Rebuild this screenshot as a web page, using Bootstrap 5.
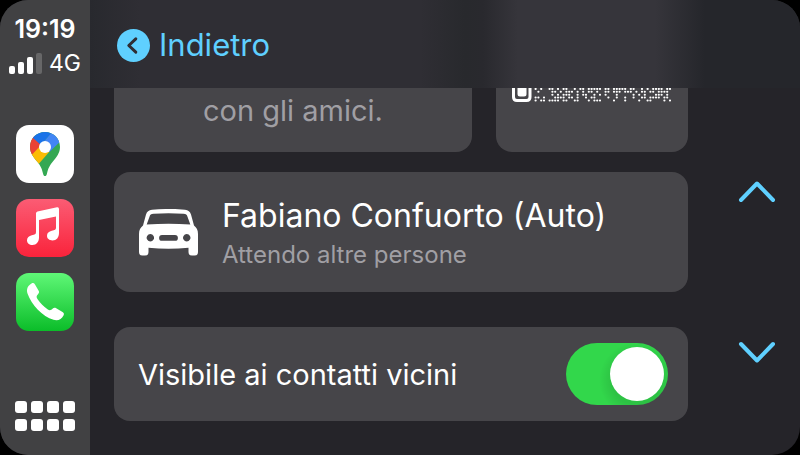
<!DOCTYPE html>
<html lang="it">
<head>
<meta charset="utf-8">
<meta name="viewport" content="width=device-width, initial-scale=1">
<title>SharePlay in auto</title>
<link href="https://cdn.jsdelivr.net/npm/bootstrap@5.3.0/dist/css/bootstrap.min.css" rel="stylesheet">
<style>
  body { background: #000; color: #fff; font-family: Inter, "Liberation Sans", sans-serif; }
  svg { display: block; }
  .screen { border-radius: 28px; background: #252429; }
  .dock { flex: 0 0 90px; background: #414143; padding: 15px 0 24px; }
  .clock { font-size: 25px; font-weight: 600; line-height: 28px; }
  .network { font-size: 23px; line-height: 28px; margin-top: 6px; gap: 7px; }
  .apps { gap: 16px; margin-top: 48px; }
  .topbar { height: 88px; padding: 2px 0 0 27px;
    background: linear-gradient(90deg, #28292e 0, #2f2e34 50px, #2f2e34 330px, #28292d 375px, #29292e 393px, #36353b 428px, #36353b 565px, #25262b 615px, #25262b 100%); }
  .back { color: #5fd0ff; font-size: 31px; line-height: 40px; gap: 9px; }
  .content { padding-left: 24px; }
  .panel { background: #464549; border-radius: 16px; }
  .upper { height: 64px; border-radius: 0 0 16px 16px; }
  .upper-row { gap: 24px; }
  .invite { color: #a09fa4; font-size: 29px; line-height: 46px; }
  .code { flex: 0 0 192px; }
  .person { height: 120px; margin-top: 20px; padding: 0 24px 0 25px; gap: 24px; }
  .person-text { padding-top: 3px; }
  .person h1 { font-size: 32px; line-height: 40px; font-weight: 400; }
  .person p { color: #a09fa4; font-size: 24px; line-height: 32px; margin-top: 3px; }
  .visible { height: 94px; margin-top: 35px; padding: 0 20px 0 24px; font-size: 29px; }
  .visible label { padding-top: 2px; }
  .form-check-input.toggle { width: 102px; height: 62px; border: 0; border-radius: 31px; background-size: 102px 62px; background-repeat: no-repeat; }
  .form-switch .form-check-input.toggle,
  .form-switch .form-check-input.toggle:focus { background-color: #69686d; background-position: center;
    background-image: url("data:image/svg+xml,%3Csvg xmlns='http://www.w3.org/2000/svg' viewBox='0 0 102 62'%3E%3Ccircle cx='31' cy='31' r='27' fill='white'/%3E%3C/svg%3E"); }
  .form-switch .form-check-input.toggle:checked { background-color: #32d74b;
    background-image: url("data:image/svg+xml,%3Csvg xmlns='http://www.w3.org/2000/svg' viewBox='0 0 102 62'%3E%3Cdefs%3E%3CradialGradient id='s'%3E%3Cstop offset='.65' stop-opacity='.1'/%3E%3Cstop offset='1' stop-opacity='0'/%3E%3C/radialGradient%3E%3C/defs%3E%3Ccircle cx='71' cy='37' r='38' fill='url(%23s)'/%3E%3Ccircle cx='71' cy='31' r='27' fill='white'/%3E%3C/svg%3E"); }
  .scroller { flex: 0 0 112px; padding: 92px 0 0 25px; gap: 136px; }
</style>
<script src="https://cdn.jsdelivr.net/npm/bootstrap@5.3.0/dist/js/bootstrap.bundle.min.js"></script>
</head>
<body>
<div class="screen d-flex min-vh-100 overflow-hidden">
  <nav class="dock d-flex flex-column align-items-center" aria-label="Dock">
    <div class="clock">19:19</div>
    <div class="network d-flex align-items-center">
      <svg width="33" height="22" viewBox="0 0 33 22" fill="#fff" aria-hidden="true"><rect y="14" width="6" height="8" rx="2"/><rect x="9" y="10" width="6" height="12" rx="2"/><rect x="18" y="5" width="6" height="17" rx="2"/><rect x="27" y="1" width="6" height="21" rx="2" opacity=".2"/></svg>
      <span>4G</span>
    </div>
    <div class="apps d-flex flex-column">
      <button type="button" class="btn p-0 border-0" aria-label="Google Maps">
        <svg width="58" height="58" viewBox="0 0 58 58">
          <defs><clipPath id="pin"><path d="M29 7C20.500 7 14 13.500 14 22C14 28 17.500 32 21.500 37C25 41.500 26 44 27 48.500C27.500 50.500 28 51 29 51S30.500 50.500 31 48.500C32 44 33 41.500 36.500 37C40.500 32 44 28 44 22C44 13.500 37.500 7 29 7Z"/></clipPath></defs>
          <rect width="58" height="58" rx="13" fill="#fff"/>
          <g clip-path="url(#pin)"><path fill="#34a853" d="M10 5h38v48H10z"/><path fill="#fbbc04" d="M8 38L24.500 18L34 26L20 42H10z"/><path fill="#ea4335" d="M10 8L18 10.500L27 18L11 35z"/><path fill="#1a73e8" d="M14 5H38L25 20L17 13z"/><path fill="#4285f4" d="M37 6L48 13L33.500 27L25 20z"/></g>
          <circle cx="29" cy="22" r="6" fill="#fff"/>
        </svg>
      </button>
      <button type="button" class="btn p-0 border-0" aria-label="Musica">
        <svg width="58" height="58" viewBox="0 0 58 58">
          <defs><linearGradient id="red" x2="0" y2="1"><stop stop-color="#fb5c74"/><stop offset="1" stop-color="#fa233b"/></linearGradient></defs>
          <rect width="58" height="58" rx="13" fill="url(#red)"/>
          <path fill="#fff" d="M21.500 12.500L41 8.200Q43 7.800 43 10V34C43 38.500 40.500 41.500 36.500 41.500C33.200 41.500 31 39.500 31 36.800C31 34 33 32.400 35.800 31.800C38.800 31.200 40 31 40 28.600V17.500L23 21V38.500C23 42.800 20.500 46 16.500 46C13.200 46 11 44 11 41.200C11 38.500 13 36.800 15.800 36.200C18.800 35.600 20 35.400 20 33V14.500Q20 12.800 21.500 12.500Z"/>
        </svg>
      </button>
      <button type="button" class="btn p-0 border-0" aria-label="Telefono">
        <svg width="58" height="58" viewBox="0 0 58 58">
          <defs><linearGradient id="green" x2="0" y2="1"><stop stop-color="#5ff777"/><stop offset="1" stop-color="#0bbd29"/></linearGradient></defs>
          <rect width="58" height="58" rx="13" fill="url(#green)"/>
          <path fill="#fff" d="M15.500 10.500C17 9.700 18 10 19 11.500L22.500 17.500C23.500 19 23 20 22 21.200C20.200 23.200 20.200 24.200 21.800 26.500C24.500 30.300 27.500 33.400 31.500 36.200C33.600 37.700 34.600 37.600 36.500 35.800C37.700 34.700 38.600 34.400 40.200 35.200L46.500 39C48 40 48.300 41 47.500 42.500C45.500 46.300 42 48.200 37.500 46.800C26.500 43.500 15.500 32 11.500 20.500C10.200 16.500 11.500 12.700 15.500 10.500Z"/>
        </svg>
      </button>
    </div>
    <button type="button" class="btn p-0 border-0 mt-auto" aria-label="Tutte le app">
      <svg width="60" height="30" viewBox="0 0 60 30" fill="#fff"><rect width="12" height="12" rx="3"/><rect x="16" width="12" height="12" rx="3"/><rect x="32" width="12" height="12" rx="3"/><rect x="48" width="12" height="12" rx="3"/><rect y="18" width="12" height="12" rx="3"/><rect x="16" y="18" width="12" height="12" rx="3"/><rect x="32" y="18" width="12" height="12" rx="3"/><rect x="48" y="18" width="12" height="12" rx="3"/></svg>
    </button>
  </nav>

  <div class="flex-grow-1 d-flex flex-column">
    <header class="topbar d-flex align-items-center">
      <a href="#" class="back d-flex align-items-center text-decoration-none">
        <svg width="33" height="33" viewBox="0 0 33 33" aria-hidden="true"><circle cx="16.500" cy="16.500" r="16.500" fill="#5fd0ff"/><path d="M18.800 9.800L11.800 16.500L18.800 23.200" fill="none" stroke="#2f2e34" stroke-width="3" stroke-linecap="round" stroke-linejoin="round"/></svg>
        <span>Indietro</span>
      </a>
    </header>
    <div class="d-flex flex-grow-1">
      <main class="content flex-grow-1">
        <div class="upper-row d-flex">
          <section class="panel upper invite flex-grow-1 text-center">con gli amici.</section>
          <section class="panel upper code">
            <svg width="192" height="20" viewBox="0 0 192 20" role="img" aria-label="Codice QR">
              <path d="M17.500 -5V9Q17.500 12.500 21 12.500H30.500Q34 12.500 34 9V-5" fill="none" stroke="#fff" stroke-width="3"/>
              <rect x="21.500" y="-4" width="9" height="12.500" rx="2.500" fill="#fff"/>
              <path id="dots" fill="none" stroke="#fff" stroke-width="2" stroke-linecap="round"/>
            </svg>
          </section>
        </div>
        <section class="panel person d-flex align-items-center">
          <svg width="59" height="47" viewBox="0 0 59 47" fill="#fff" aria-hidden="true"><path fill-rule="evenodd" d="M13 .8C23 -.3 36 -.3 46 .8C49.300 1.200 51 2.600 52 5.500L55 16.500C57.600 18.800 59 21 59 25V43Q59 46.500 55.500 46.500H53Q49.500 46.500 49.500 43V38.800Q29.500 40.500 9.500 38.800V43Q9.500 46.500 6 46.500H3.500Q0 46.500 0 43V25C0 21 1.400 18.800 4 16.500L7 5.500C8 2.600 9.700 1.200 13 .8ZM14.500 4.800C12 5.100 11.200 5.600 10.500 7.700L7.700 15.500Q29.500 13.900 51.300 15.500L48.500 7.700C47.800 5.600 47 5.100 44.500 4.800Q29.500 3.500 14.500 4.800ZM11.300 25a3.700 3.700 0 1 0 .1 0ZM47.700 25a3.700 3.700 0 1 0 .1 0ZM23 26A2.900 2.900 0 0 0 23 31.800H36A2.900 2.900 0 0 0 36 26Z"/></svg>
          <div class="person-text">
            <h1 class="mb-0">Fabiano Confuorto (Auto)</h1>
            <p class="mb-0">Attendo altre persone</p>
          </div>
        </section>
        <section class="panel visible form-switch d-flex align-items-center justify-content-between">
          <label for="visibility">Visibile ai contatti vicini</label>
          <input id="visibility" class="form-check-input toggle m-0" type="checkbox" role="switch" checked>
        </section>
      </main>
      <aside class="scroller d-flex flex-column align-items-center">
        <button type="button" class="btn p-0 border-0" aria-label="Scorri su"><svg width="38" height="24" viewBox="0 0 38 24"><path d="M3 20L19 3.500L35 20" fill="none" stroke="#5fd0ff" stroke-width="4" stroke-linecap="round" stroke-linejoin="round"/></svg></button>
        <button type="button" class="btn p-0 border-0" aria-label="Scorri giù"><svg width="38" height="24" viewBox="0 0 38 24"><path d="M3 4L19 20.500L35 4" fill="none" stroke="#5fd0ff" stroke-width="4" stroke-linecap="round" stroke-linejoin="round"/></svg></button>
      </aside>
    </div>
  </div>
</div>
<script>
  // Each string is one row of code modules; "#" marks a filled dot.
  const rows = [
    "#.#..##.#.##..#.##.#####.##.#####.##..#.#.####.##",
    ".#....##.#.###.#.#.##.#..##.###.###.#.##.##.####.",
    "......#.#.###..#.##..#.#.#...#.....#.#.#...###.#.",
    "##.#...####.##.#..#.##....#..#..#..#..##.####.##.",
    "#.##.####.##..##...#.###....#...#....#..##....#.#"
  ];
  let d = "";
  rows.forEach((row, y) => [...row].forEach((cell, x) => {
    if (cell === "#") d += `M${(39.5 + x * 2.8).toFixed(1)} ${(0.9 + y * 2.9).toFixed(1)}h.2`;
  }));
  document.getElementById("dots").setAttribute("d", d);
</script>
</body>
</html>
